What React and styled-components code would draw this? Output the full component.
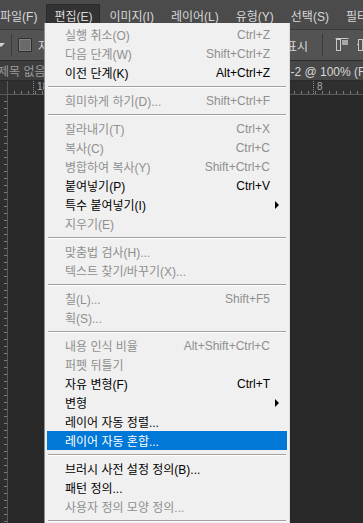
import React from "react";
import styled, { createGlobalStyle } from "styled-components";

const GlobalStyle = createGlobalStyle`
  html, body {
    margin: 0;
    padding: 0;
    background: #282828;
    overflow: hidden;
  }
  body {
    font-family: "Liberation Sans", "Noto Sans CJK KR", sans-serif;
    font-size: 12px;
  }
`;

const menuBarItems = ["파일(F)", "편집(E)", "이미지(I)", "레이어(L)", "유형(Y)", "선택(S)", "필터(T)"];

const editItems = [
  { label: "실행 취소(O)", shortcut: "Ctrl+Z", disabled: true },
  { label: "다음 단계(W)", shortcut: "Shift+Ctrl+Z", disabled: true },
  { label: "이전 단계(K)", shortcut: "Alt+Ctrl+Z" },
  { sep: true },
  { label: "희미하게 하기(D)...", shortcut: "Shift+Ctrl+F", disabled: true },
  { sep: true },
  { label: "잘라내기(T)", shortcut: "Ctrl+X", disabled: true },
  { label: "복사(C)", shortcut: "Ctrl+C", disabled: true },
  { label: "병합하여 복사(Y)", shortcut: "Shift+Ctrl+C", disabled: true },
  { label: "붙여넣기(P)", shortcut: "Ctrl+V" },
  { label: "특수 붙여넣기(I)", submenu: true },
  { label: "지우기(E)", disabled: true },
  { sep: true },
  { label: "맞춤법 검사(H)...", disabled: true },
  { label: "텍스트 찾기/바꾸기(X)...", disabled: true },
  { sep: true },
  { label: "칠(L)...", shortcut: "Shift+F5", disabled: true },
  { label: "획(S)...", disabled: true },
  { sep: true },
  { label: "내용 인식 비율", shortcut: "Alt+Shift+Ctrl+C", disabled: true },
  { label: "퍼펫 뒤틀기", disabled: true },
  { label: "자유 변형(F)", shortcut: "Ctrl+T" },
  { label: "변형", submenu: true },
  { label: "레이어 자동 정렬..." },
  { label: "레이어 자동 혼합...", active: true },
  { sep: true },
  { label: "브러시 사전 설정 정의(B)..." },
  { label: "패턴 정의..." },
  { label: "사용자 정의 모양 정의...", disabled: true },
  { sep: true },
  { label: "제거(R)", submenu: true },
];

const App = () => {
  return (
    <>
      <GlobalStyle />
      <Window>
        <MenuBar>
          {menuBarItems.map((item) => (
            <MenuBarItem key={item} $open={item === "편집(E)"}>
              {item}
            </MenuBarItem>
          ))}
        </MenuBar>

        <ToolBar>
          <DropArrow />
          <ToolSep $left={6} $right={6} />
          <CheckBox />
          <ToolLabel>자동 선택: 레이어</ToolLabel>
          <Spacer />
          <ToolLabel>변형 컨트롤 표시</ToolLabel>
          <ToolSep $left={14} $right={12} />
          <AlignIcon viewBox="0 0 14 14">
            <path d="M0.5 0.5h13" stroke="#c8c8c8" />
            <rect x="1.5" y="1.5" width="4" height="11" fill="none" stroke="#c8c8c8" />
            <rect x="7" y="2" width="6" height="5" fill="#a8a8a8" />
          </AlignIcon>
          <AlignIcon viewBox="0 0 14 14">
            <path d="M0 6.5h14" stroke="#c8c8c8" />
            <rect x="1.5" y="1.5" width="4" height="11" fill="#535353" stroke="#c8c8c8" />
            <rect x="7" y="4" width="6" height="5" fill="#a8a8a8" />
          </AlignIcon>
        </ToolBar>

        <TabRow>
          <DocTab $width={233}>제목 없음-1 @ 100% (레이어 1, RGB/8) ×</DocTab>
          <DocTab $active>제목 없음-2 @ 100% (RGB/8) ×</DocTab>
        </TabRow>

        <Workspace>
          <RulerCorner />
          <TopRuler>
            <RulerMark $x={25}>18</RulerMark>
            <RulerMark $x={305}>8</RulerMark>
          </TopRuler>
          <SideRuler />
          <Canvas />
        </Workspace>

        <Menu>
          {editItems.map((item, i) =>
            item.sep ? (
              <Separator key={i} />
            ) : (
              <MenuItem key={i} $disabled={item.disabled} $active={item.active}>
                <span>{item.label}</span>
                <Shortcut>{item.shortcut}</Shortcut>
                <Arrow $show={item.submenu} />
              </MenuItem>
            )
          )}
        </Menu>
      </Window>
    </>
  );
};

export default App;

const Window = styled.div`
  position: relative;
  width: 363px;
  height: 523px;
  overflow: hidden;
  display: flex;
  flex-direction: column;
  background: #282828;
  font-family: "Liberation Sans", "Noto Sans CJK KR", sans-serif;
`;

const MenuBar = styled.div`
  height: 29px;
  flex: none;
  display: flex;
  align-items: stretch;
  padding-top: 4px;
  box-sizing: border-box;
  background: #4b4b4b;
  margin-left: -8px;
`;

const MenuBarItem = styled.div`
  display: flex;
  align-items: center;
  padding: 0 8px 3px;
  margin-right: 1px;
  color: #d8d8d8;
  font-size: 12px;
  white-space: nowrap;
  background: ${(p) => (p.$open ? "#333333" : "transparent")};
  box-shadow: ${(p) => (p.$open ? "inset 0 0 0 1px #2a2a2a" : "none")};
`;

const ToolBar = styled.div`
  height: 32px;
  flex: none;
  display: flex;
  align-items: center;
  width: calc(100% + 16px);
  background: #535353;
  border-top: 1px solid #3a3a3a;
  border-bottom: 1px solid #2c2c2c;
  box-sizing: border-box;
  color: #d8d8d8;
  font-size: 12px;
  white-space: nowrap;
`;

const DropArrow = styled.div`
  width: 0;
  height: 0;
  margin-left: -3px;
  border-left: 4px solid transparent;
  border-right: 4px solid transparent;
  border-top: 4px solid #d0d0d0;
`;

const ToolSep = styled.div`
  width: 1px;
  height: 22px;
  margin: 0 ${(p) => p.$right}px 0 ${(p) => p.$left}px;
  background: #3b3b3b;
`;

const CheckBox = styled.div`
  width: 12px;
  height: 12px;
  border: 1px solid #2e2e2e;
  background: #6a6a6a;
  box-shadow: inset 0 0 0 1px #7d7d7d;
  border-radius: 1px;
  margin-right: 6px;
`;

const ToolLabel = styled.span`
  color: #dadada;
`;

const Spacer = styled.div`
  flex: 1;
`;

const AlignIcon = styled.svg`
  width: 14px;
  height: 14px;
  margin-right: 8px;
  flex: none;
`;

const TabRow = styled.div`
  height: 19px;
  flex: none;
  display: flex;
  align-items: stretch;
  background: #3d3d3d;
  border-bottom: 1px solid #2a2a2a;
  overflow: hidden;
  white-space: nowrap;
  margin-left: -2px;
`;

const DocTab = styled.div`
  flex: none;
  width: ${(p) => (p.$width ? `${p.$width}px` : "auto")};
  overflow: hidden;
  display: flex;
  align-items: center;
  padding-left: ${(p) => (p.$active ? "12px" : "0")};
  background: ${(p) => (p.$active ? "#474747" : "#3d3d3d")};
  color: ${(p) => (p.$active ? "#d6d6d6" : "#9a9a9a")};
  font-size: 12px;
`;

const Workspace = styled.div`
  flex: 1;
  display: grid;
  grid-template-columns: 8px 1fr;
  grid-template-rows: 14px 1fr;
`;

const RulerCorner = styled.div`
  background: #323232;
  border-right: 1px solid #5a5a5a;
  border-bottom: 1px solid #5a5a5a;
`;

const TopRuler = styled.div`
  position: relative;
  background:
    repeating-linear-gradient(90deg, transparent 0 6px, #7a7a7a 6px 7px) bottom / 100% 3px no-repeat,
    #2f2f2f;
  border-bottom: 1px solid #5a5a5a;
`;

const RulerMark = styled.span`
  position: absolute;
  left: ${(p) => p.$x}px;
  top: 0;
  bottom: 0;
  padding-left: 3px;
  border-left: 1px dotted #8a8a8a;
  font-family: "Liberation Sans", sans-serif;
  font-size: 10px;
  line-height: 12px;
  color: #a8a8a8;
`;

const SideRuler = styled.div`
  background:
    repeating-linear-gradient(180deg, transparent 0 6px, #7a7a7a 6px 7px) right / 3px 100% no-repeat,
    #2f2f2f;
  border-right: 1px solid #5a5a5a;
`;

const Canvas = styled.div`
  background: #282828;
`;

const Menu = styled.div`
  position: absolute;
  left: 44px;
  top: 23px;
  width: 246px;
  box-sizing: border-box;
  padding: 2px 2px;
  background: #f0f0f0;
  border-left: 1px solid #8f8f8f;
  border-right: 1px solid #dcdcdc;
  display: flex;
  flex-direction: column;
`;

const MenuItem = styled.div`
  height: 19px;
  display: grid;
  grid-template-columns: 1fr auto 12px;
  align-items: center;
  padding: 0 5px 0 18px;
  white-space: nowrap;
  font-size: 12px;
  color: ${(p) => (p.$active ? "#ffffff" : p.$disabled ? "#8f8f8f" : "#000000")};
  background: ${(p) => (p.$active ? "#0078d7" : "transparent")};
`;

const Shortcut = styled.span`
  text-align: right;
`;

const Arrow = styled.span`
  justify-self: end;
  margin-right: 3px;
  width: 0;
  height: 0;
  border-top: 4px solid transparent;
  border-bottom: 4px solid transparent;
  border-left: ${(p) => (p.$show ? "4px solid #000" : "0")};
`;

const Separator = styled.div`
  height: 9px;
  display: flex;
  align-items: center;
  padding-left: 1px;
  padding-right: 1px;

  &::after {
    content: "";
    flex: 1;
    height: 1px;
    background: #a0a0a0;
    border-bottom: 1px solid #ffffff;
  }
`;
